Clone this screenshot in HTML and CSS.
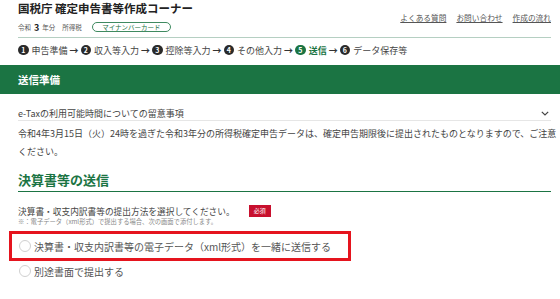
FILE: index.html
```html
<!DOCTYPE html>
<html lang="ja">

<head>
    <meta charset="UTF-8">
    <meta name="viewport" content="width=device-width, initial-scale=1.0">
    <title>確定申告書等作成コーナー</title>
    <link rel="stylesheet" href="styles.css">
</head>

<body>
    <!-- ヘッダー -->
    <header class="top">
        <div class="top-left">
            <h1 class="site-title">国税庁 確定申告書等作成コーナー</h1>
            <div class="year-row">
                <span>令和</span><b class="year-num">3</b><span>年分</span>
                <span class="tax-kind">所得税</span>
                <span class="pill">マイナンバーカード</span>
            </div>
        </div>
        <nav class="top-links">
            <a href="#">よくある質問</a>
            <a href="#">お問い合わせ</a>
            <a href="#">作成の流れ</a>
        </nav>
    </header>

    <!-- 進捗ステップ -->
    <div class="steps">
        <span class="num">1</span><span class="step">申告準備</span><span class="arrow">→</span>
        <span class="num">2</span><span class="step">収入等入力</span><span class="arrow">→</span>
        <span class="num">3</span><span class="step">控除等入力</span><span class="arrow">→</span>
        <span class="num">4</span><span class="step">その他入力</span><span class="arrow">→</span>
        <span class="num current">5</span><span class="step current">送信</span><span class="arrow">→</span>
        <span class="num">6</span><span class="step">データ保存等</span>
    </div>

    <div class="section-bar">送信準備</div>

    <main class="content">
        <div class="notice-toggle">
            <span>e-Taxの利用可能時間についての留意事項</span>
            <svg class="chevron" width="8" height="5" viewBox="0 0 8 5">
                <path d="M0.8 0.8 L4 4 L7.2 0.8" fill="none" stroke="#444" stroke-width="1.2" />
            </svg>
        </div>
        <p class="notice-text">令和4年3月15日（火）24時を過ぎた令和3年分の所得税確定申告データは、確定申告期限後に提出されたものとなりますので、ご注意ください。</p>

        <h2 class="sub-head">決算書等の送信</h2>

        <div class="question">
            <span>決算書・収支内訳書等の提出方法を選択してください。</span>
            <span class="req">必須</span>
        </div>
        <p class="hint">※：電子データ（xml形式）で提出する場合、次の画面で添付します。</p>

        <label class="option option-marked"><span class="radio"></span>決算書・収支内訳書等の電子データ（xml形式）を一緒に送信する</label>
        <label class="option"><span class="radio"></span>別途書面で提出する</label>
    </main>
</body>

</html>
```

FILE: styles.css
```css
* {
    margin: 0;
    padding: 0;
    box-sizing: border-box;
}

body {
    font-family: "Noto Sans CJK JP", "Noto Sans", sans-serif;
    color: #333;
    background: #fff;
    overflow: hidden;
}

/* ヘッダー */
.top {
    display: flex;
    justify-content: space-between;
    margin: 0 9px 0 18px;
    padding-bottom: 5px;
    border-bottom: 1px solid #b5cfc2;
}
.site-title {
    font-size: 11.5px;
    line-height: 16px;
    font-weight: bold;
    color: #222;
}
.year-row {
    display: flex;
    align-items: center;
    height: 10px;
    margin-top: 6px;
    font-size: 6.5px;
    color: #555;
}
.year-num {
    font-size: 9px;
    margin: 0 3px;
    color: #222;
}
.tax-kind {
    margin-left: 7px;
}
.pill {
    margin-left: 10px;
    width: 79px;
    height: 10px;
    line-height: 8px;
    border: 1px solid #3f8a60;
    border-radius: 6px;
    text-align: center;
    color: #1b7443;
    font-size: 6.5px;
}
.top-links {
    display: flex;
    gap: 10px;
    margin-top: 13px;
    font-size: 7.7px;
    line-height: 10px;
    height: 10px;
}
.top-links a {
    color: #555;
    text-decoration: underline;
}

/* 進捗ステップ */
.steps {
    display: flex;
    align-items: center;
    height: 14px;
    margin: 5px 0 8px 18px;
    font-size: 9px;
    color: #444;
}
.num {
    display: inline-flex;
    align-items: center;
    justify-content: center;
    width: 10.5px;
    height: 10.5px;
    border-radius: 50%;
    background: #2a2a2a;
    color: #fff;
    font-size: 7px;
    font-weight: bold;
    margin-right: 3px;
}
.num.current {
    background: #1b7443;
}
.step.current {
    color: #1b7443;
    font-weight: bold;
}
.arrow {
    font-weight: bold;
    color: #333;
    margin: 0 2px;
}

.section-bar {
    height: 29px;
    line-height: 29px;
    padding-left: 18px;
    background: #1b7443;
    color: #fff;
    font-size: 10.5px;
    font-weight: bold;
}

/* 本文 */
.content {
    padding: 0 9px 0 18px;
}
.notice-toggle {
    display: flex;
    justify-content: space-between;
    align-items: center;
    margin-top: 12px;
    height: 15px;
    font-size: 9px;
    color: #444;
    border-bottom: 1px solid #e6e6e6;
}
.chevron {
    margin-right: 2px;
}
.notice-text {
    margin-top: 4px;
    margin-right: -6px;
    font-size: 9px;
    line-height: 18px;
    color: #444;
}
.sub-head {
    margin-top: 10px;
    padding-bottom: 2px;
    font-size: 13px;
    line-height: 18px;
    color: #1b7443;
    border-bottom: 1px solid #1b7443;
}
.question {
    display: flex;
    align-items: center;
    margin-top: 12px;
    height: 14px;
    font-size: 8.7px;
    color: #444;
}
.req {
    margin-left: 14px;
    width: 22px;
    height: 12px;
    line-height: 12px;
    text-align: center;
    background: #c8102e;
    color: #fff;
    font-size: 6px;
}
.hint {
    font-size: 6.3px;
    line-height: 8px;
    color: #888;
}
.option {
    display: flex;
    align-items: center;
    height: 20px;
    padding-left: 1px;
    font-size: 10px;
    color: #555;
}
.option-marked {
    width: fit-content;
    height: 30px;
    margin: 5px 0 0 -9px;
    padding: 0 17px 0 7px;
    border: 3px solid #e5141e;
}
.radio {
    width: 12px;
    height: 12px;
    border: 1px solid #d0d0d0;
    border-radius: 50%;
    margin-right: 3px;
}
```
